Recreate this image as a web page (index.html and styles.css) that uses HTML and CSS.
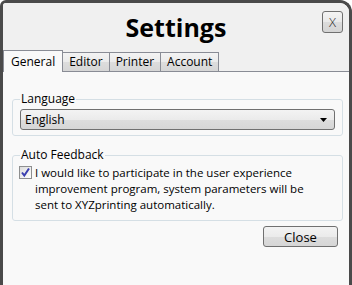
FILE: index.html
```html
<!DOCTYPE html>
<html lang="en">
<head>
  <meta charset="UTF-8">
  <title>Settings</title>
  <link rel="stylesheet" href="styles.css">
</head>
<body>
  <div class="window">
    <header class="titlebar">
      <span></span>
      <h1 class="title">Settings</h1>
      <button class="close-x">X</button>
    </header>
    <nav class="tabs">
      <div class="tab selected">General</div>
      <div class="tab">Editor</div>
      <div class="tab">Printer</div>
      <div class="tab">Account</div>
    </nav>
    <main class="panel">
      <fieldset class="group language">
        <legend>Language</legend>
        <div class="combo">
          <span>English</span>
          <svg class="arrow" width="7" height="4" viewBox="0 0 7 4"><path d="M0 0H7L3.5 4Z" fill="#000"/></svg>
        </div>
      </fieldset>
      <fieldset class="group feedback">
        <legend>Auto Feedback</legend>
        <label class="check-row">
          <span class="checkbox">
            <svg width="11" height="11" viewBox="0 0 11 11"><path d="M2 5.5L4.3 8.5L9 1.5" fill="none" stroke="#3a3fb0" stroke-width="2"/></svg>
          </span>
          <span class="check-text">I would like to participate in the user experience<br>improvement program, system parameters will be<br>sent to XYZprinting automatically.</span>
        </label>
      </fieldset>
      <div class="actions">
        <button class="btn">Close</button>
      </div>
    </main>
  </div>
</body>
</html>
```
FILE: styles.css
```css
body {
  margin: 0;
  background: #fff;
  font-family: "Open Sans", "Liberation Sans", sans-serif;
  font-size: 12px;
  color: #000;
}
.window {
  box-sizing: border-box;
  width: 352px;
  height: 285px;
  border: 3px solid #4a4a4a;
  border-bottom: none;
  border-radius: 6px 12px 0 0;
  background: #f9f9f9;
  overflow: hidden;
}
.titlebar {
  height: 47px;
  background: #f0f0f0;
  display: grid;
  grid-template-columns: 1fr auto 1fr;
  align-items: start;
}
.title {
  margin: 9px 0 0;
  font-size: 25px;
  line-height: 30px;
  font-weight: bold;
}
.close-x {
  justify-self: end;
  margin: 8px 6px 0 0;
  width: 21px;
  height: 22px;
  padding: 0;
  border: 1px solid #707070;
  border-radius: 3px;
  background: linear-gradient(#f4f4f4, #e9e9e9 50%, #dcdcdc 51%, #d4d4d4);
  font-family: "Open Sans", sans-serif;
  font-size: 13px;
  font-weight: 300;
  color: #222;
}
.tabs {
  height: 21px;
  background: #f0f0f0;
  border-bottom: 1px solid #898c95;
  display: flex;
  align-items: flex-end;
}
.tab {
  box-sizing: border-box;
  height: 19px;
  margin-left: -1px;
  padding: 0 6px;
  border: 1px solid #898c95;
  border-bottom: none;
  background: linear-gradient(#f3f3f3, #ebebeb 50%, #dddddd 51%, #d6d6d6);
  line-height: 18px;
}
.tab.selected {
  margin-left: 0;
  height: 22px;
  margin-bottom: -1px;
  padding: 0 7px;
  background: #f9f9f9;
  line-height: 22px;
  position: relative;
}
.panel {
  padding: 19px 6px 0 9px;
}
.group {
  margin: 0;
  padding: 0 7px 5px;
  border: 1px solid #d5dfe5;
  border-radius: 3px;
}
.group legend {
  padding: 0 1px;
  line-height: 16px;
}
.feedback {
  margin-top: 11px;
  padding-bottom: 7px;
}
.combo {
  box-sizing: border-box;
  height: 21px;
  margin-top: 2px;
  padding: 0 7px 0 4px;
  border: 1px solid #707070;
  border-radius: 3px;
  background: linear-gradient(#f3f3f3, #ebebeb 50%, #dddddd 51%, #d6d6d6);
  display: flex;
  align-items: center;
  justify-content: space-between;
}
.check-row {
  display: flex;
  align-items: flex-start;
  gap: 3px;
  margin-top: 2px;
}
.checkbox {
  box-sizing: border-box;
  flex: none;
  width: 13px;
  height: 13px;
  margin: 1px 0 0 -1px;
  border: 1px solid #8e8f8f;
  background: linear-gradient(135deg, #dcdcdc, #ffffff);
  display: flex;
}
.check-text {
  font-size: 11.5px;
  line-height: 16px;
}
.actions {
  display: flex;
  justify-content: flex-end;
  padding: 5px 5px 0 0;
}
.btn {
  width: 75px;
  height: 21px;
  padding: 0;
  border: 1px solid #707070;
  border-radius: 3px;
  background: linear-gradient(#f3f3f3, #ebebeb 50%, #dddddd 51%, #d6d6d6);
  font-family: inherit;
  font-size: 13px;
  color: #000;
}
```
